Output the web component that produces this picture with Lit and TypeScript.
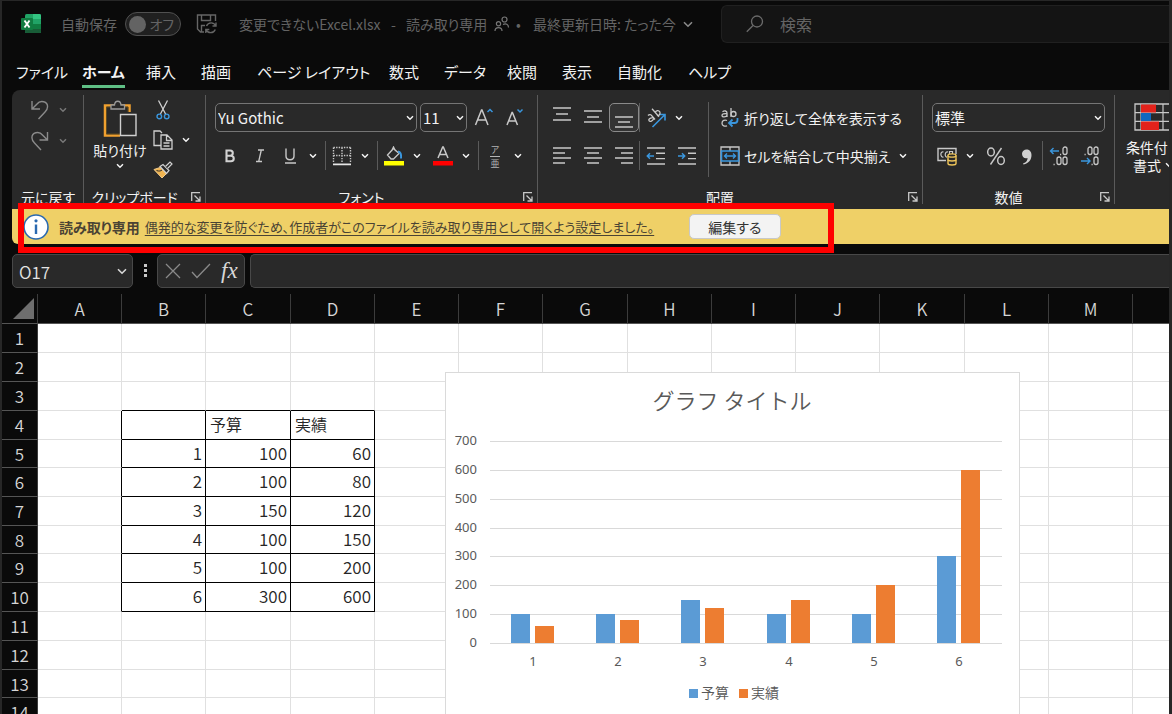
import { LitElement, html, svg, css, nothing } from "lit";
import { customElement } from "lit/decorators.js";
import { classMap } from "lit/directives/class-map.js";

const chevron = html`<svg class="chev-icon" width="8" height="6" viewBox="0 0 8 6"><path d="M1 1.2 4 4.2 7 1.2" fill="none" stroke="currentColor" stroke-width="1.5" /></svg>`;

const icon = (w: number, h: number, body: unknown) =>
  html`<svg class="icon" width=${w} height=${h} viewBox="0 0 ${w} ${h}" fill="none" aria-hidden="true">${body}</svg>`;

const lines = (rows: number[][]) =>
  icon(28, 29, svg`<path stroke="#c8c8c8" stroke-width="1.4" d=${rows.map(([x, y, w]) => `M${x} ${y}h${w}`).join("")} />`);

const icons = {
  excel: icon(20, 20, svg`
    <rect x="4" y="0" width="16" height="19" rx="1.5" fill="#21a366" />
    <path d="M12 0h6.500a1.500 1.500 0 0 1 1.500 1.500V5h-8z" fill="#33c481" />
    <path d="M4 5h8v5H4z" fill="#107c41" /><path d="M12 10h8v5h-8z" fill="#107c41" />
    <path d="M4 10h8v9H5.500A1.500 1.500 0 0 1 4 17.500z" fill="#185c37" /><path d="M12 15h8v2.500a1.500 1.500 0 0 1-1.500 1.500H12z" fill="#185c37" />
    <rect x="0" y="4" width="12" height="12" rx="1" fill="#107c41" />
    <path d="M3.500 6.500l5 7M8.500 6.500l-5 7" stroke="#fff" stroke-width="1.900" />`),
  save: icon(22, 22, svg`
    <path d="M8 19H4.500L1.500 16V2h18v6M5.500 2v5.500h9V2M5.500 19v-6.500H9" stroke="#666" stroke-width="1.400" />
    <path d="M19.800 13a5 5 0 0 0-9.300 0M10 16.500a5 5 0 0 0 9.300 0M20 9.500V13h-3.500M9.800 20v-3.500h3.500" stroke="#666" stroke-width="1.400" />`),
  people: icon(16, 16, svg`
    <circle cx="10.500" cy="3.500" r="2.500" stroke="#777" stroke-width="1.200" /><path d="M9 8.500c3-1.500 5.500 0 5.500 3" stroke="#777" stroke-width="1.200" />
    <circle cx="4.500" cy="7.800" r="2.100" stroke="#777" stroke-width="1.200" /><path d="M1 15c0-4.500 7-4.500 7 0" stroke="#777" stroke-width="1.200" />`),
  search: icon(18, 18, svg`<circle cx="11" cy="6.500" r="5.500" stroke="#6b6b6b" stroke-width="1.300" /><path d="M7 10.500.8 16.800" stroke="#6b6b6b" stroke-width="1.300" />`),
  undo: icon(20, 20, svg`<path d="M2 1v8h8M2.300 8.800 7 4C10.500-.5 18 1.500 17.500 7c0 2-1 3.500-2.500 5L8.500 19" stroke="#8a8a8a" stroke-width="1.400" />`),
  redo: icon(20, 20, svg`<path d="M17.500 1v8h-8M17.200 8.800 12.500 4C9-.5 1.500 1.500 2 7c0 2 1 3.500 2.500 5l6.500 7" stroke="#8a8a8a" stroke-width="1.400" />`),
  paste: icon(34, 37, svg`
    <path d="M26.500 12V5.500H2v30h15" stroke="#f0a02f" stroke-width="2.500" />
    <path d="M25 12V7H3.500v27H17" stroke="#5e4a20" stroke-width="1" />
    <path d="M8 9V5h3.500c.5-5 6-5 6.500 0h3.500v4z" fill="#292929" stroke="#9a9a9a" stroke-width="1.300" />
    <path d="M17.500 14.500H33v21H17.500z" fill="#292929" stroke="#d0d0d0" stroke-width="1.400" />`),
  cut: icon(14, 20, svg`<path d="M2.500.5 9.700 14.200M11.500.5 4.300 14.200" stroke="#d0d0d0" stroke-width="1.300" />
    <circle cx="3.300" cy="16.400" r="2.300" stroke="#3a96dd" stroke-width="1.400" /><circle cx="10.700" cy="16.400" r="2.300" stroke="#3a96dd" stroke-width="1.400" />`),
  copy: icon(20, 20, svg`<path d="M7.500 15.500H1V1h6l2 2M8 5h6l5 5v9H8zM13.500 5v5.500H19M10.500 13h6M10.500 16h6" stroke="#cfcfcf" stroke-width="1.300" />`),
  brush: icon(20, 18, svg`<path d="M1 8.500 7 6.500l7 5.500-5 5z" fill="#f0b450" stroke="#efc98a" />
    <path d="m7 5.500 3-2 6 6-2.500 3z" fill="#292929" stroke="#d0d0d0" stroke-width="1.200" /><path d="M12.500 5.500 17 1l2 2-4.500 4.500" fill="#292929" stroke="#d0d0d0" stroke-width="1.200" />
    <path d="M3.500 9.500C6 10.500 8 10 9 9" stroke="#292929" />`),
  growFont: icon(20, 20, svg`<path d="M1.500 17 7.500 2h.5l6 15M3.700 12h8" stroke="#c8c8c8" stroke-width="1.500" /><path d="m13.500 4 2.500-2.500L18.500 4" stroke="#3a96dd" stroke-width="1.500" />`),
  shrinkFont: icon(20, 20, svg`<path d="M3 17 8 4.500h.4L13.500 17M5 13h6.600" stroke="#c8c8c8" stroke-width="1.500" /><path d="m13.500 1.500 2.500 2.500 2.500-2.500" stroke="#3a96dd" stroke-width="1.500" />`),
  bold: icon(12, 16, svg`<path d="M2.500 2.500h3.700a2.500 2.500 0 0 1 0 5.200H2.500zm0 5.200h4.500a2.700 2.700 0 0 1 0 5.500H2.500z" stroke="#d2d2d2" stroke-width="2.100" />`),
  italic: icon(12, 16, svg`<path d="M4 2h6M2 13.500h6M7.300 2 4.700 13.500" stroke="#c8c8c8" stroke-width="1.300" />`),
  underline: icon(12, 16, svg`<path d="M2 .5v7.500c0 5 8 5 8 0V.5M1 15h11" stroke="#c8c8c8" stroke-width="1.400" />`),
  borders: icon(20, 20, svg`<path d="M1.500 1.500h17M1.500 1.500v15M18.500 1.500v15M1.500 9.500h17M10 1.500v15" stroke="#c8c8c8" stroke-width="1.400" stroke-dasharray="1.400 1.200" /><path d="M1 18.300h18" stroke="#e6e6e6" stroke-width="1.800" />`),
  bucket: icon(20, 20, svg`<path d="m3.500 9 6-6.500 5.500 5-5.500 5.500H7zM7.500 5l2-4 2 4" stroke="#c8c8c8" stroke-width="1.300" /><path d="M14 5.500c3 .5 3.500 3 3 7" stroke="#3a96dd" stroke-width="2" /><path d="M0 15h20v4.500H0z" fill="#ff0" />`),
  fontColor: icon(20, 20, svg`<path d="M5 12 9.700 1h.6L15 12M6.800 8.500h6.400" stroke="#c8c8c8" stroke-width="1.500" /><path d="M0 15h20v4.500H0z" fill="#f00" />`),
  orient: icon(20, 20, svg`<path d="m6.500 19 12-12M13 6.500h6v6" stroke="#3a96dd" stroke-width="1.600" />
    <g stroke="#c8c8c8" stroke-width="1.300"><path d="M2 7.500c1.500-1.500 3-1 4 .5l3 3.500M7 9.500c-2 .5-5 1-4 3.200 1 1.500 4 .3 4.500-2" /><path d="m6 .8 7 8M9.300 4.600c.5-2.300 3.500-2.600 4.500-.8 1 2-.8 4.300-2.800 3.600" /></g>`),
  wrap: icon(20, 20, svg`<g stroke="#c8c8c8" stroke-width="1.300"><path d="M2.500 3.700c2-1.400 4.500-.9 4.500 1.300v4M7 5.800c-3-.3-5 .2-5 1.700 0 2 4 2 5-.3M11 0v9" /><circle cx="13.500" cy="6" r="2.500" /><path d="M7 12.500c-2-1-5 0-5 2.700s3 3.600 5 2.500" /></g>
    <path d="M17.500 10v2c0 2.500-1 3-3 3H9.500M12.500 11.500 9 15l3.500 3.500" stroke="#3a96dd" stroke-width="1.800" />`),
  merge: icon(20, 20, svg`<path d="M1 1h18v18H1zM10 1v4M10 15v4" stroke="#c8c8c8" stroke-width="1.300" /><path d="M1.500 5h17v10h-17z" stroke="#3a96dd" stroke-width="1.600" /><path d="M4.500 10h11M7 7.500 4.500 10 7 12.500M13 7.500l2.500 2.500-2.500 2.500" stroke="#3a96dd" stroke-width="1.400" />`),
  outdent: icon(20, 20, svg`<path d="M1 2h18M10 7.300h9M10 12.600h9M1 18h18" stroke="#c8c8c8" stroke-width="1.400" /><path d="M8 10H1.500M4 7.300 1.300 10 4 12.700" stroke="#3a96dd" stroke-width="1.500" />`),
  indent: icon(20, 20, svg`<path d="M1 2h18M11 7.300h8M11 12.600h8M1 18h18" stroke="#c8c8c8" stroke-width="1.400" /><path d="M1 10h6.500M5 7.300 7.700 10 5 12.700" stroke="#3a96dd" stroke-width="1.500" />`),
  currency: icon(20, 20, svg`<path d="M9 14.500H1v-12h18V8" stroke="#c8c8c8" stroke-width="1.400" /><path d="M6.500 6c-3.500-1-3.500 5.500 0 5M11 6c-3.500-1-3.500 5.500-1 5M12.500 8V5.500h3V8" stroke="#c8c8c8" stroke-width="1.200" />
    <path d="M11 9.500v8c0 2 8 2 8 0v-8" fill="#292929" stroke="#efc55a" stroke-width="1.400" /><ellipse cx="15" cy="9.500" rx="4" ry="1.600" fill="#292929" stroke="#efc55a" stroke-width="1.400" /><path d="M11 13.500c0 2 8 2 8 0" stroke="#efc55a" stroke-width="1.400" />`),
  percent: icon(20, 20, svg`<ellipse cx="5" cy="6" rx="3.300" ry="4" stroke="#c8c8c8" stroke-width="1.500" /><ellipse cx="15" cy="14.500" rx="3.300" ry="4" stroke="#c8c8c8" stroke-width="1.500" /><path d="M15.500 2 4.500 18.500" stroke="#c8c8c8" stroke-width="1.400" />`),
  comma: icon(12, 18, svg`<path d="M2 16.500c3.500-1 4.500-3 4.500-5.500C3.500 12 1 10 1 6.800 1 1 10.500.5 10.500 8c0 5-3 8.500-8 9.500z" fill="#d0d0d0" />`),
  moreDec: icon(20, 20, svg`<path d="M10 5H1.500M4.500 2 1.500 5l3 3" stroke="#3a96dd" stroke-width="1.400" /><g stroke="#c8c8c8" stroke-width="1.300"><rect x="14" y="1" width="4" height="7.500" rx="2" /><rect x="8" y="11" width="4" height="7.500" rx="2" /><rect x="14" y="11" width="4" height="7.500" rx="2" /><path d="M11 8.500h1.200M4.500 18.500h1.200" /></g>`),
  lessDec: icon(20, 20, svg`<path d="M1 15h9M7 12l3 3-3 3" stroke="#3a96dd" stroke-width="1.400" /><g stroke="#c8c8c8" stroke-width="1.300"><rect x="8" y="1" width="4" height="7.500" rx="2" /><rect x="14" y="1" width="4" height="7.500" rx="2" /><rect x="14" y="11" width="4" height="7.500" rx="2" /><path d="M4.500 8.500h1.200M11.500 18.500h1.200" /></g>`),
  condFormat: icon(38, 28, svg`<path d="M1 1h36v26H1z" stroke="#c8c8c8" stroke-width="1.300" /><path d="M1 9.700h36M1 18.300h36M7 1v26M29 1v26" stroke="#c8c8c8" stroke-width="1.200" />
    <path d="M7 1.500h15v8H7zM7 18.500h18v8.500H7z" fill="#e3221b" /><path d="M7 10h10v8H7z" fill="#1068bf" />`),
  launcher: icon(10, 10, svg`<path d="M.7 9V.7H9M3.500 3.500l5 5M9 4.500V9H4.500" stroke="#c8c8c8" stroke-width="1.300" />`),
  info: icon(26, 26, svg`<circle cx="13" cy="13" r="12" fill="#fff" stroke="#2a69b0" stroke-width="1.600" /><path d="M13 10.500V20" stroke="#2a69b0" stroke-width="2.400" /><circle cx="13" cy="6.800" r="1.600" fill="#2a69b0" />`),
  cancel: icon(16, 16, svg`<path d="m1 1 14 14M15 1 1 15" stroke="#8a8a8a" stroke-width="1.300" />`),
  enter: icon(20, 16, svg`<path d="m1 9 5 5.500L19 1" stroke="#8a8a8a" stroke-width="1.300" />`),
  dots: icon(4, 14, svg`<path d="M0 0h3v3H0zM0 5h3v3H0zM0 10h3v3H0z" fill="#c8c8c8" />`),
  corner: icon(21, 21, svg`<path d="M21 0v21H0z" fill="#6e6e6e" />`),
  selectChev: icon(10, 7, svg`<path d="m1 1.200 4 4 4-4" stroke="currentColor" stroke-width="1.600" />`),
};

const DATA = [
  { label: 1, budget: 100, actual: 60 },
  { label: 2, budget: 100, actual: 80 },
  { label: 3, budget: 150, actual: 120 },
  { label: 4, budget: 100, actual: 150 },
  { label: 5, budget: 100, actual: 200 },
  { label: 6, budget: 300, actual: 600 },
];

const base = css`
  * { box-sizing: border-box; }
  button { font: inherit; color: inherit; background: none; border: 0; padding: 0; margin: 0; }
  svg { display: block; flex: none; }
`;

@customElement("title-bar")
class TitleBar extends LitElement {
  static styles = [base, css`
    :host { display: grid; grid-template-columns: 40px 64px 71px 43px 152px 15px 88px 22px 17px 150px 38px 1fr; align-items: center; height: 46px; padding-left: 19px; color: #646464; font-size: 14px; white-space: nowrap; }
    .toggle { display: flex; align-items: center; justify-content: space-between; width: 56px; height: 24px; padding: 0 6px 0 3px; border: 1px solid #505050; border-radius: 12px; background: #202020; line-height: 20px; }
    .knob { width: 17px; height: 17px; border-radius: 50%; background: #636363; }
    .when { display: flex; align-items: center; color: #8a8a8a; }
    .search { display: flex; align-items: center; gap: 16px; height: 38px; padding-left: 24px; border: 1px solid #202020; border-right: 0; border-radius: 6px 0 0 6px; background: #141414; }
    .search input { flex: 1; min-width: 0; border: 0; padding: 0; background: none; font: inherit; font-size: 16px; color: #646464; }
    .search input::placeholder { color: #646464; }
  `];
  render() {
    return html`
      ${icons.excel}
      <span id="auto">自動保存</span>
      <button class="toggle" role="switch" aria-checked="false" aria-labelledby="auto"><span class="knob"></span>オフ</button>
      <button aria-label="保存">${icons.save}</button>
      <span>変更できないExcel.xlsx</span>
      <span>-</span>
      <span>読み取り専用</span>
      ${icons.people}
      <span>•</span>
      <span>最終更新日時: たった今</span>
      <button class="when" aria-label="更新履歴">${icons.selectChev}</button>
      <label class="search">${icons.search}<input type="search" placeholder="検索" aria-label="検索" /></label>`;
  }
}

@customElement("ribbon-tabs")
class RibbonTabs extends LitElement {
  static styles = [base, css`
    :host { display: grid; grid-template-columns: 66px 64px 55px 56px 132px 55px 63px 55px 55px 71px auto; align-items: start; justify-items: start; justify-content: start; height: 43px; padding: 12px 14px 0; color: #f2f2f2; font-size: 15px; line-height: 24px; white-space: nowrap; }
    .tab { height: 29px; border-bottom: 3px solid transparent; }
    .active { font-weight: 700; border-color: #5fbf85; }
  `];
  render() {
    return ["ファイル", "ホーム", "挿入", "描画", "ページ レイアウト", "数式", "データ", "校閲", "表示", "自動化", "ヘルプ"].map(
      (t, i) => html`<button class=${classMap({ tab: true, active: i === 1 })}>${t}</button>`);
  }
}

@customElement("ribbon-panel")
class RibbonPanel extends LitElement {
  static styles = [base, css`
    :host { display: flex; height: 119px; margin-left: 10px; padding-top: 5px; overflow: hidden; border-radius: 8px 0 0 0; background: #292929; color: #f2f2f2; font-size: 14px; }
    .group { display: flex; flex: none; flex-direction: column; justify-content: space-between; height: 112px; background: linear-gradient(#5a5a5a, #5a5a5a) right top / 1px 109px no-repeat; }
    .undo-group { width: 72px; }
    .clip-group { width: 122px; }
    .font-group { width: 332px; }
    .align-group { width: 385px; }
    .number-group { width: 192px; }
    .cond-group { width: 76px; background: none; }
    .foot { display: flex; align-items: center; height: 20px; line-height: 20px; white-space: nowrap; }
    .name { flex: 1; text-align: center; }
    .launch { display: flex; width: 16px; height: 20px; margin-right: 5px; align-items: center; justify-content: flex-end; }
    .tools { display: flex; flex-direction: column; gap: 9px; padding: 8px 0 0 9px; }
    .row { display: flex; align-items: center; height: 29px; }
    .btn { display: flex; align-items: center; justify-content: center; width: 30px; height: 29px; }
    .chev { display: flex; align-items: center; justify-content: center; width: 16px; height: 29px; }
    .chev + .btn { margin-left: 3px; }
    .spaced .btn + .btn { margin-left: 1px; }
    .sep { width: 1px; height: 29px; margin: 0 1px 0 4px; background: #5a5a5a; }
    .tight { margin: 0 1px 0 0; }
    .selected { border: 1px solid #8a8a8a; border-radius: 5px; background: #333; }
    .combo { display: flex; position: relative; align-items: center; height: 29px; }
    .combo select { appearance: none; width: 100%; height: 29px; padding: 0 18px 0 2px; border: 1px solid #757575; border-radius: 5px; background: #292929; color: #f2f2f2; font: inherit; font-size: 15px; }
    .combo .chev-icon { position: absolute; right: 3px; pointer-events: none; }
    .font-combo { width: 202px; margin-right: 3px; }
    .size-combo { width: 47px; margin-right: 2px; }
    .num-combo { width: 173px; }
    .dim { color: #777; }
    .undo-tools { display: flex; flex-direction: column; gap: 2px; padding: 0 0 0 13px; }
    .clip-tools { display: flex; padding: 0 0 0 11px; gap: 7px; }
    .paste { display: flex; flex-direction: column; align-items: center; width: 50px; padding-top: 5px; line-height: 22px; gap: 2px; white-space: nowrap; }
    .clip-col { display: flex; flex-direction: column; gap: 1px; }
    .clip-col .btn { width: 22px; }
    .clip-col .chev { width: 24px; }
    .align-tools { display: flex; }
    .align-tools .spaced { width: 170px; }
    .vsep { width: 1px; height: 75px; margin-top: 7px; background: #5a5a5a; }
    .wide { display: flex; align-items: center; gap: 4px; white-space: nowrap; }
    .wide-tools { padding-left: 11px; }
    .merge-chev { margin-left: 5px; }
    .ruby { display: flex; flex-direction: column; align-items: center; font-size: 9px; color: #b4b4b4; }
    .ruby-line { height: 13px; line-height: 13px; }
    .ruby-line + .ruby-line { border-top: 1px solid #b4b4b4; }
    .cond { display: flex; flex-direction: column; align-items: center; margin-top: 8px; line-height: 18px; white-space: nowrap; }
    .cond-text { margin-top: 7px; }
    .cond-line { display: flex; align-items: center; gap: 4px; }
  `];
  foot(name: string, launcher = true) {
    return html`<div class="foot"><span class="name">${name}</span>${launcher ? html`<button class="launch" aria-label="${name}の設定">${icons.launcher}</button>` : nothing}</div>`;
  }
  btn(label: string, content: unknown, selected = false) {
    return html`<button class=${classMap({ btn: true, selected })} aria-label=${label}>${content}</button>`;
  }
  chev(label: string, dim = false) {
    return html`<button class=${classMap({ chev: true, dim })} aria-label=${label}>${chevron}</button>`;
  }
  render() {
    return html`
      <section class="group undo-group">
        <div class="undo-tools">
          <div class="row">${this.btn("元に戻す", icons.undo)}${this.chev("元に戻す一覧", true)}</div>
          <div class="row">${this.btn("やり直し", icons.redo)}${this.chev("やり直し一覧", true)}</div>
        </div>
        ${this.foot("元に戻す", false)}
      </section>
      <section class="group clip-group">
        <div class="clip-tools">
          <button class="paste">${icons.paste}<span>貼り付け</span>${chevron}</button>
          <div class="clip-col">
            <div class="row">${this.btn("切り取り", icons.cut)}</div>
            <div class="row">${this.btn("コピー", icons.copy)}${this.chev("コピー一覧")}</div>
            <div class="row">${this.btn("書式のコピー", icons.brush)}</div>
          </div>
        </div>
        ${this.foot("クリップボード")}
      </section>
      <section class="group font-group">
        <div class="tools">
          <div class="row">
            <span class="combo font-combo"><select aria-label="フォント名"><option>Yu Gothic</option></select>${chevron}</span>
            <span class="combo size-combo"><select aria-label="フォント サイズ"><option>11</option></select>${chevron}</span>
            ${this.btn("フォント サイズの拡大", icons.growFont)}${this.btn("フォント サイズの縮小", icons.shrinkFont)}
          </div>
          <div class="row">
            ${this.btn("太字", icons.bold)}${this.btn("斜体", icons.italic)}${this.btn("下線", icons.underline)}${this.chev("下線一覧")}
            <span class="sep"></span>
            ${this.btn("罫線", icons.borders)}${this.chev("罫線一覧")}
            <span class="sep"></span>
            ${this.btn("塗りつぶし", icons.bucket)}${this.chev("塗りつぶし一覧")}${this.btn("文字の色", icons.fontColor)}${this.chev("文字の色一覧")}
            <span class="sep"></span>
            ${this.btn("ふりがな", html`<span class="ruby"><span class="ruby-line">ア</span><span class="ruby-line">亜</span></span>`)}${this.chev("ふりがな一覧")}
          </div>
        </div>
        ${this.foot("フォント")}
      </section>
      <section class="group align-group">
        <div class="align-tools">
          <div class="tools spaced">
            <div class="row">
              ${this.btn("上揃え", lines([[5, 5, 18], [8, 11, 12], [5, 17, 18]]))}
              ${this.btn("上下中央揃え", lines([[5, 8, 18], [8, 14, 12], [5, 19, 18]]))}
              ${this.btn("下揃え", lines([[5, 14, 18], [8, 19, 12], [5, 24, 18]]), true)}
              <span class="sep tight"></span>
              ${this.btn("方向", icons.orient)}${this.chev("方向一覧")}
            </div>
            <div class="row">
              ${this.btn("左揃え", lines([[5, 7, 18], [5, 12, 12], [5, 17, 18], [5, 22, 12]]))}
              ${this.btn("中央揃え", lines([[5, 7, 18], [8, 12, 12], [5, 17, 18], [8, 22, 12]]))}
              ${this.btn("右揃え", lines([[5, 7, 18], [11, 12, 12], [5, 17, 18], [11, 22, 12]]))}
              <span class="sep tight"></span>
              ${this.btn("インデントを減らす", icons.outdent)}${this.btn("インデントを増やす", icons.indent)}
            </div>
          </div>
          <span class="vsep"></span>
          <div class="tools wide-tools">
            <div class="row"><button class="wide">${icons.wrap}<span>折り返して全体を表示する</span></button></div>
            <div class="row"><button class="wide">${icons.merge}<span>セルを結合して中央揃え</span></button><span class="merge-chev">${this.chev("結合一覧")}</span></div>
          </div>
        </div>
        ${this.foot("配置")}
      </section>
      <section class="group number-group">
        <div class="tools spaced">
          <div class="row"><span class="combo num-combo"><select aria-label="数値の書式"><option>標準</option></select>${chevron}</span></div>
          <div class="row">
            ${this.btn("通貨表示形式", icons.currency)}${this.chev("通貨一覧")}${this.btn("パーセント スタイル", icons.percent)}${this.btn("桁区切りスタイル", icons.comma)}
            <span class="sep tight"></span>
            ${this.btn("小数点以下の表示桁数を増やす", icons.moreDec)}${this.btn("小数点以下の表示桁数を減らす", icons.lessDec)}
          </div>
        </div>
        ${this.foot("数値")}
      </section>
      <section class="group cond-group">
        <button class="cond">${icons.condFormat}<span class="cond-text">条件付き</span><span class="cond-line">書式${chevron}</span></button>
      </section>`;
  }
}

@customElement("message-bar")
class MessageBar extends LitElement {
  static styles = [base, css`
    :host { display: flex; position: relative; align-items: center; height: 35px; margin-left: 10px; padding-left: 11px; border-radius: 0 0 0 6px; background: #efd067; color: #4a4334; font-size: 14px; white-space: nowrap; }
    .title { margin: 0 5px 0 10px; font-weight: 700; }
    .link { width: 510px; color: inherit; font-size: 13px; text-underline-offset: 3px; }
    .edit { width: 92px; height: 25px; margin-left: 34px; border: 1px solid #c8c8c8; border-radius: 5px; background: #f3f3f3; color: #333; }
    .marker { position: absolute; top: -6px; bottom: -9px; left: 6px; width: 816px; border: 6px solid #f00; pointer-events: none; }
  `];
  render() {
    return html`
      ${icons.info}
      <strong class="title">読み取り専用</strong>
      <a class="link" href="#">偶発的な変更を防ぐため、作成者がこのファイルを読み取り専用として開くよう設定しました。</a>
      <button class="edit">編集する</button>
      <span class="marker"></span>`;
  }
}

@customElement("formula-bar")
class FormulaBar extends LitElement {
  static styles = [base, css`
    :host { display: flex; align-items: center; height: 50px; padding: 4px 0 0 10px; color: #d8d8d8; }
    .box { display: flex; align-items: center; height: 34px; border: 1px solid #484848; border-radius: 5px; background: #292929; }
    .ref { width: 121px; padding: 0 5px 0 6px; }
    input { min-width: 0; flex: 1; border: 0; padding: 0; background: none; color: #e4e4e4; font: inherit; font-size: 17px; font-weight: 350; }
    .dots { margin: 0 9px 0 11px; }
    .actions { width: 88px; padding-left: 7px; gap: 10px; margin-right: 5px; }
    .fx { font-family: "Liberation Serif", serif; font-style: italic; font-size: 23px; line-height: 24px; }
    .formula { flex: 1; border-right: 0; border-radius: 5px 0 0 5px; }
  `];
  render() {
    return html`
      <div class="box ref"><input aria-label="名前ボックス" .value=${"O17"} /><button aria-label="名前一覧">${icons.selectChev}</button></div>
      <span class="dots">${icons.dots}</span>
      <div class="box actions"><button aria-label="キャンセル">${icons.cancel}</button><button aria-label="入力">${icons.enter}</button><button class="fx">fx</button></div>
      <div class="box formula"><input aria-label="数式バー" /></div>`;
  }
}

@customElement("bar-chart")
class BarChart extends LitElement {
  static styles = [base, css`
    :host { display: block; width: 575px; height: 360px; border: 1px solid #dadada; background: #fff; }
    .title { font-size: 22px; fill: #595959; font-weight: 350; text-anchor: middle; }
    .tick { font-family: "Noto Sans", sans-serif; font-size: 13px; fill: #595959; }
    .end { text-anchor: end; }
    .mid { text-anchor: middle; }
    .legend { font-size: 14px; font-weight: 350; fill: #595959; }
    .budget { fill: #5b9bd5; }
    .actual { fill: #ed7d31; }
  `];
  render() {
    const zero = 270;
    const h = (v: number) => Math.round((v * 202) / 700);
    const bar = (x: number, v: number, c: string) => svg`<rect class=${c} x=${x} y=${zero - h(v)} width="19" height=${h(v)} />`;
    return html`<svg width="573" height="358" role="img" aria-label="グラフ タイトル">
      <text class="title" x="286" y="36">グラフ タイトル</text>
      ${[0, 100, 200, 300, 400, 500, 600, 700].map((v) => svg`
        <rect x="44" y=${zero - h(v)} width="512" height="1" fill="#d9d9d9" />
        <text class="tick end" x="31" y=${zero - h(v) + 4}>${v}</text>`)}
      ${DATA.map((d, i) => {
        const x = 65 + Math.floor((i * 512) / 6);
        return svg`${bar(x, d.budget, "budget")}${bar(x + 24, d.actual, "actual")}<text class="tick mid" x=${x + 22} y="293">${d.label}</text>`;
      })}
      <rect class="budget" x="243" y="316" width="9" height="9" /><text class="legend" x="255" y="325">予算</text>
      <rect class="actual" x="293" y="316" width="9" height="9" /><text class="legend" x="305" y="325">実績</text>
    </svg>`;
  }
}

@customElement("work-sheet")
class WorkSheet extends LitElement {
  static styles = [base, css`
    :host { display: block; position: relative; flex: 1; min-height: 0; overflow: hidden; background: #fff; }
    table { width: 1215px; table-layout: fixed; border-collapse: separate; border-spacing: 0; color: #262626; font-size: 17px; font-weight: 350; line-height: 24px; }
    col { width: 84px; }
    col:nth-child(4n) { width: 85px; }
    .gutter { width: 36px; }
    th { padding: 0; background: #0a0a0a; color: #d6d6d6; font-weight: 350; border-right: 1px solid #3c3c3c; border-bottom: 1px solid #555; }
    thead tr { height: 30px; }
    tbody tr { height: 29px; }
    tbody tr:nth-child(8n + 5), tbody tr:nth-child(8n) { height: 28px; }
    td { padding: 0 3px 2px 4px; border-right: 1px solid #e0e0e0; border-bottom: 1px solid #e0e0e0; text-align: right; }
    .text { text-align: left; font-size: 16px; }
    .line-right { border-right-color: #000; }
    .line-bottom { border-bottom-color: #000; }
    .corner { padding-left: 11px; }
    .chart { position: absolute; left: 443px; top: 78px; }
  `];
  value(r: number, c: number) {
    if (r === 4) return c === 2 ? "予算" : c === 3 ? "実績" : "";
    const d = DATA[r - 5];
    return d ? [undefined, d.label, d.budget, d.actual][c] ?? "" : "";
  }
  render() {
    const cols = [..."ABCDEFGHIJKLMN"];
    const rows = Array.from({ length: 14 }, (_, i) => i + 1);
    return html`
      <table>
        <colgroup><col class="gutter" />${cols.map(() => html`<col />`)}</colgroup>
        <thead><tr><th class="corner">${icons.corner}</th>${cols.map((c) => html`<th scope="col">${c}</th>`)}</tr></thead>
        <tbody>${rows.map((r) => html`<tr><th scope="row">${r}</th>${cols.map((_, c) => html`<td class=${classMap({
          text: r === 4,
          "line-right": r >= 4 && r <= 10 && c <= 3,
          "line-bottom": r >= 3 && r <= 10 && c >= 1 && c <= 3,
        })}>${this.value(r, c)}</td>`)}</tr>`)}</tbody>
      </table>
      <bar-chart class="chart"></bar-chart>`;
  }
}

@customElement("app-root")
class AppRoot extends LitElement {
  static styles = [base, css`
    :host { display: flex; box-sizing: border-box; flex-direction: column; height: 100vh; overflow: hidden; border: solid #272727; border-width: 1px 3px 0 2px; background: #0a0a0a; font-family: "Noto Sans CJK JP", "Noto Sans", sans-serif; }
    .ui { font-feature-settings: "palt"; }
    .above { z-index: 1; }
  `];
  render() {
    return html`
      <title-bar class="ui"></title-bar>
      <ribbon-tabs class="ui"></ribbon-tabs>
      <ribbon-panel class="ui"></ribbon-panel>
      <message-bar class="ui above"></message-bar>
      <formula-bar></formula-bar>
      <work-sheet></work-sheet>`;
  }
}
